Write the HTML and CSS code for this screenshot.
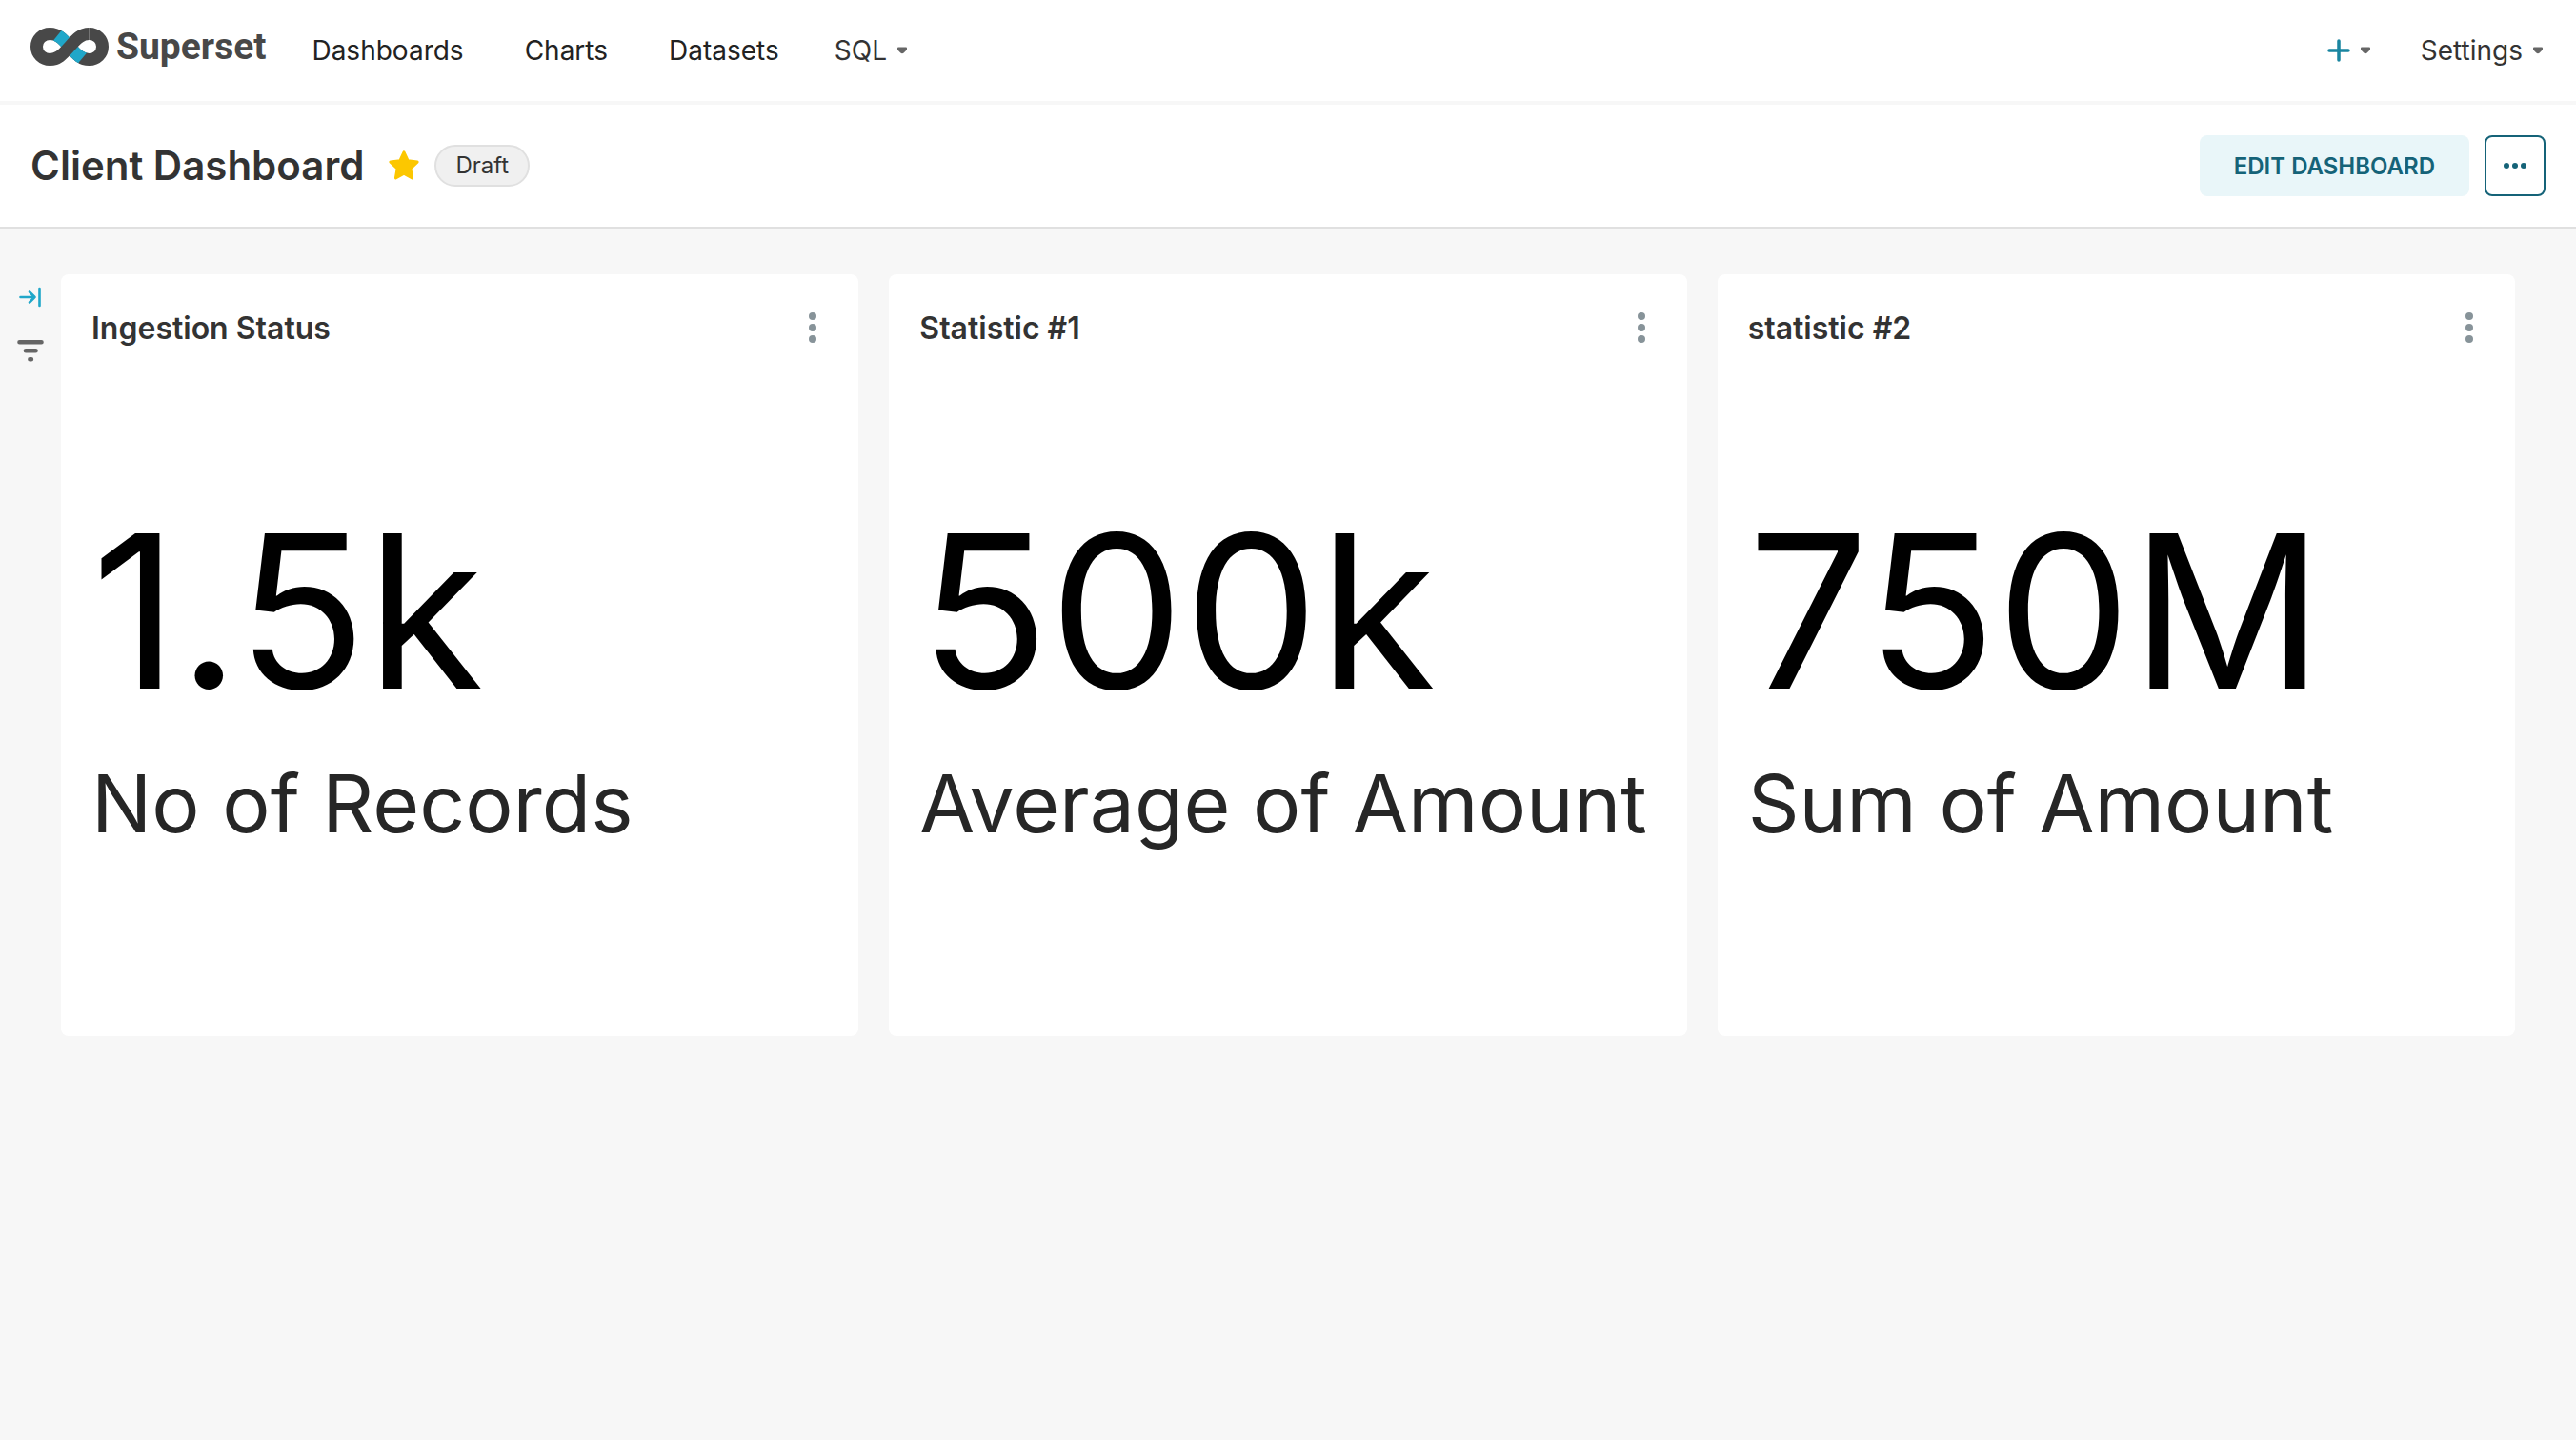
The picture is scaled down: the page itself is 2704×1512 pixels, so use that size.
FILE: index.html
```html
<!DOCTYPE html>
<html lang="en">
<head>
  <meta charset="utf-8">
  <meta name="viewport" content="width=device-width, initial-scale=1">
  <title>Client Dashboard</title>
  <link rel="stylesheet" href="styles.css">
</head>
<body>
  <svg class="sprite" aria-hidden="true">
    <symbol id="caret" viewBox="0 0 16 16">
      <path d="M4 4.5h8q1 0 1 1v1q0 .8-.6 1.300l-2.700 2.700q-.7.800-1.700.800t-1.700-.8L3.600 7.800Q3 7.300 3 6.500v-1q0-1 1-1z" fill="#666"/>
    </symbol>
    <symbol id="kebab" viewBox="0 0 8 32">
      <g fill="#879399"><circle cx="4" cy="4" r="4"/><circle cx="4" cy="16" r="4"/><circle cx="4" cy="28" r="4"/></g>
    </symbol>
  </svg>

  <header class="navbar">
    <a class="brand" href="#">
      <svg class="brand-mark" viewBox="0 0 82 40" aria-hidden="true">
        <clipPath id="strand"><path d="M20 18.500L36-1.300 62 23 46.700 41.300z"/></clipPath>
        <g fill="none" stroke-width="13">
          <path d="M41 20C33 11 28.500 6.500 20.500 6.500C12.500 6.500 6.500 12.500 6.500 20S12.500 33.500 20.500 33.500M61.500 6.500C69.500 6.500 75.500 12.500 75.500 20S69.500 33.500 61.500 33.500C53.500 33.500 49 29 41 20" stroke="#484848"/>
          <path d="M20.500 6.500C28.500 6.500 33 11 41 20S53.500 33.500 61.500 33.500" stroke="#20a7c9" clip-path="url(#strand)"/>
          <path d="M20.500 33.500C28.500 33.500 33 29 41 20S53.500 6.500 61.500 6.500" stroke="#484848"/>
        </g>
      </svg>
      <span class="brand-name">Superset</span>
    </a>
    <nav class="menu">
      <a class="menu-link" href="#">Dashboards</a>
      <a class="menu-link" href="#">Charts</a>
      <a class="menu-link" href="#">Datasets</a>
    </nav>
    <button class="menu-button" type="button">SQL<svg class="caret"><use href="#caret"/></svg></button>
    <div class="menu-right">
      <button class="menu-button" type="button" aria-label="New">
        <svg class="plus" viewBox="0 0 24 24"><path d="M12 2v20M2 12h20" fill="none" stroke="#1985a0" stroke-width="3.500" stroke-linecap="round"/></svg>
        <svg class="caret"><use href="#caret"/></svg>
      </button>
      <button class="menu-button" type="button">Settings<svg class="caret"><use href="#caret"/></svg></button>
    </div>
  </header>

  <section class="title-bar">
    <h1 class="title">Client Dashboard</h1>
    <button class="star" type="button" aria-label="Favorite">
      <svg viewBox="0 0 32 32"><path d="M16 1.800l4.200 9 9.900 1.300-7.200 6.900 1.700 9.900-8.600-4.700-8.600 4.700 1.700-9.900L1.900 12.100l9.900-1.300z" fill="#fcc700" stroke="#fcc700" stroke-width="3" stroke-linejoin="round"/></svg>
    </button>
    <span class="tag">Draft</span>
    <div class="actions">
      <button class="edit" type="button">EDIT DASHBOARD</button>
      <button class="more" type="button" aria-label="More">
        <svg viewBox="0 0 24 6"><g fill="#156378"><circle cx="3" cy="3" r="3"/><circle cx="12" cy="3" r="3"/><circle cx="21" cy="3" r="3"/></g></svg>
      </button>
    </div>
  </section>

  <div class="workspace">
    <aside class="rail">
      <button class="rail-button" type="button" aria-label="Expand">
        <svg viewBox="0 0 32 32"><path d="M5.500 16h15M15 10.500l5.500 5.500-5.500 5.500M25.500 7v18" fill="none" stroke="#20a7c9" stroke-width="2.600" stroke-linecap="round" stroke-linejoin="round"/></svg>
      </button>
      <button class="rail-button" type="button" aria-label="Filters">
        <svg viewBox="0 0 32 32"><path d="M4.500 7.300h23M11 16.300h10.500M15.400 25.300h1.500" fill="none" stroke="#666" stroke-width="4.600" stroke-linecap="round"/></svg>
      </button>
    </aside>
    <main class="grid">
      <article class="card">
        <div class="card-head">
          <h2 class="card-title">Ingestion Status</h2>
          <button class="card-menu" type="button" aria-label="Chart options"><svg><use href="#kebab"/></svg></button>
        </div>
        <div class="card-body">
          <div class="value">1.5k</div>
          <div class="caption">No of Records</div>
        </div>
      </article>
      <article class="card">
        <div class="card-head">
          <h2 class="card-title">Statistic #1</h2>
          <button class="card-menu" type="button" aria-label="Chart options"><svg><use href="#kebab"/></svg></button>
        </div>
        <div class="card-body">
          <div class="value">500k</div>
          <div class="caption">Average of Amount</div>
        </div>
      </article>
      <article class="card">
        <div class="card-head">
          <h2 class="card-title">statistic #2</h2>
          <button class="card-menu" type="button" aria-label="Chart options"><svg><use href="#kebab"/></svg></button>
        </div>
        <div class="card-body">
          <div class="value">750M</div>
          <div class="caption">Sum of Amount</div>
        </div>
      </article>
    </main>
  </div>
</body>
</html>
```
FILE: styles.css
```css
* {
  box-sizing: border-box;
}

body {
  margin: 0;
  min-height: 100vh;
  background: #f7f7f7;
  color: #333;
  font-family: Inter, "Liberation Sans", sans-serif;
  font-size: 28px;
}

button {
  display: flex;
  align-items: center;
  justify-content: center;
  margin: 0;
  padding: 0;
  border: 0;
  background: none;
  color: inherit;
  font: inherit;
  cursor: pointer;
}

svg {
  display: block;
}

.sprite {
  position: absolute;
  width: 0;
  height: 0;
}

/* Top navigation */
.navbar {
  display: flex;
  align-items: center;
  height: 110px;
  padding: 0 32px;
  background: #fff;
  border-bottom: 4px solid #f7f7f7;
}

.brand {
  display: flex;
  align-items: center;
  gap: 8px;
  padding-bottom: 8px;
  margin-right: 48px;
  text-decoration: none;
}

.brand-mark {
  width: 82px;
  height: 40px;
}

.brand-name {
  color: #484848;
  font-family: Roboto, sans-serif;
  font-size: 39px;
  font-weight: 700;
  line-height: 44px;
}

.menu {
  display: flex;
  gap: 64px;
  margin-right: 58px;
}

.menu-link {
  color: #222;
  line-height: 44px;
  text-decoration: none;
}

.menu-button {
  gap: 8px;
  line-height: 44px;
}

.menu-right {
  display: flex;
  gap: 50px;
  margin-left: auto;
}

.caret {
  width: 16px;
  height: 16px;
}

.plus {
  width: 24px;
  height: 24px;
}

/* Dashboard title bar */
.title-bar {
  display: flex;
  align-items: center;
  height: 130px;
  padding: 0 32px;
  background: #fff;
  border-bottom: 2px solid #e0e0e0;
}

.title {
  margin: 0 26px 0 0;
  font-size: 42px;
  font-weight: 600;
  line-height: 56px;
}

.star {
  width: 32px;
  height: 32px;
  margin-right: 16px;
}

.star svg {
  width: 32px;
  height: 32px;
}

.tag {
  padding: 0 20px;
  border: 2px solid #e0e0e0;
  border-radius: 22px;
  background: #f0f0f0;
  font-size: 24px;
  line-height: 40px;
}

.actions {
  display: flex;
  gap: 16px;
  margin-left: auto;
}

.edit {
  height: 64px;
  padding: 0 36px;
  border-radius: 8px;
  background: #e9f6f9;
  color: #156378;
  font-size: 24px;
  font-weight: 600;
}

.more {
  width: 64px;
  height: 64px;
  border: 2px solid #156378;
  border-radius: 8px;
}

.more svg {
  width: 24px;
  height: 6px;
}

/* Filter rail and chart grid */
.workspace {
  display: flex;
  padding: 48px 64px 48px 0;
}

.rail {
  display: flex;
  flex: none;
  flex-direction: column;
  gap: 8px;
  width: 64px;
}

.rail-button {
  height: 48px;
}

.rail-button svg {
  width: 32px;
  height: 32px;
}

.grid {
  display: grid;
  flex: 1;
  grid-template-columns: repeat(3, 1fr);
  gap: 32px;
}

.card {
  display: flex;
  flex-direction: column;
  min-height: 800px;
  padding: 36px 32px;
  border-radius: 8px;
  background: #fff;
}

.card-head {
  display: flex;
  align-items: center;
  justify-content: space-between;
  height: 40px;
}

.card-title {
  margin: 0;
  padding-top: 2px;
  font-size: 32px;
  font-weight: 600;
  line-height: 40px;
}

.card-menu {
  width: 32px;
  height: 40px;
}

.card-menu svg {
  width: 8px;
  height: 32px;
}

.card-body {
  display: flex;
  flex: 1;
  flex-direction: column;
  justify-content: center;
  gap: 48px;
}

.value {
  color: #000;
  font-size: 224px;
  line-height: 224px;
}

.caption {
  color: #262626;
  font-size: 84px;
  line-height: 84px;
  white-space: nowrap;
}
```
